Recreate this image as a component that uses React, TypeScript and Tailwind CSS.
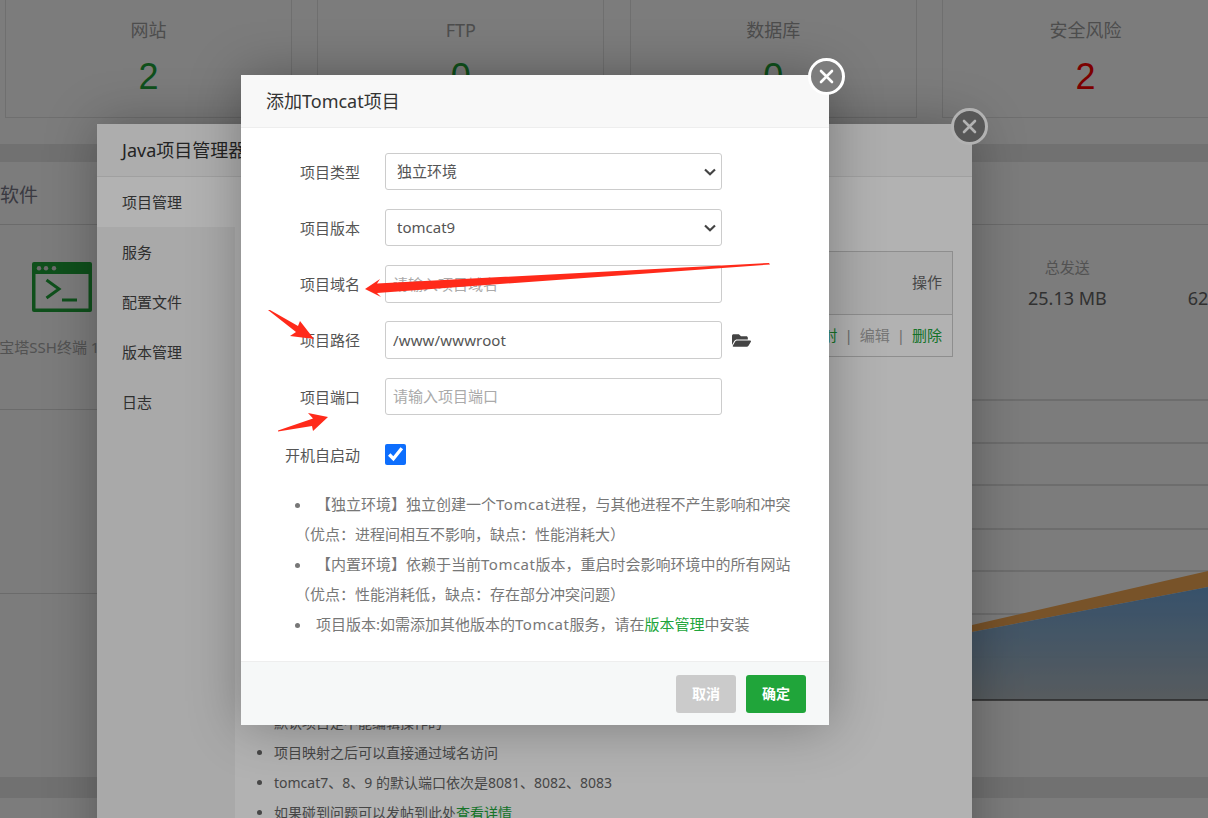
import type { ReactNode } from "react"
import { FaFolderOpen } from "react-icons/fa"

const stats = [
  { name: "网站", value: "2", color: "text-[#20a53a]" },
  { name: "FTP", value: "0", color: "text-[#20a53a]" },
  { name: "数据库", value: "0", color: "text-[#20a53a]" },
  { name: "安全风险", value: "2", color: "text-[#ff0000]" },
]

const javaMenu = ["项目管理", "服务", "配置文件", "版本管理", "日志"]

const gridLines = [10, 53, 95, 139, 181, 224, 267]

function CloseButton({ top }: { top: string }) {
  return (
    <div className={`absolute -right-[16px] flex h-[37px] w-[37px] items-center justify-center rounded-full border-[3px] border-white bg-[#7d7d7d] ${top}`}>
      <svg width="15" height="15" viewBox="0 0 15 15" fill="none" stroke="white" strokeWidth="2.6" strokeLinecap="round">
        <path d="M2 2 13 13M13 2 2 13" />
      </svg>
    </div>
  )
}

function FormRow({ label, children, className = "" }: { label: string; children: ReactNode; className?: string }) {
  return (
    <div className={`flex items-center ${className}`}>
      <label className="mr-[25px] w-[119px] pt-px text-right text-[15px] text-[#555]">{label}</label>
      {children}
    </div>
  )
}

function SelectBox({ value }: { value: string }) {
  return (
    <div className="relative h-[37px] w-[337px]">
      <select defaultValue={value} className="h-full w-full appearance-none rounded-[3px] border border-[#ccc] bg-white pl-[11px] text-[15px] text-[#555]">
        <option value={value}>{value}</option>
      </select>
      <svg className="pointer-events-none absolute right-[6px] top-[15px]" width="12" height="8" viewBox="0 0 12 8" fill="none" stroke="#444" strokeWidth="2.2">
        <path d="M1 1.5 6 6.2 11 1.5" />
      </svg>
    </div>
  )
}

function SshIcon() {
  return (
    <svg width="60" height="50" viewBox="0 0 60 50" fill="none">
      <rect width="60" height="50" rx="2" fill="#20a53a" />
      <rect x="3.5" y="12" width="53" height="34.5" fill="white" />
      <circle cx="7" cy="6.3" r="2.2" fill="#ddd" />
      <circle cx="14" cy="6.3" r="2.2" fill="#ddd" />
      <circle cx="22" cy="6.3" r="2.2" fill="#ddd" />
      <path d="M14.5 18 27 27 14.5 36" stroke="#20a53a" strokeWidth="3" />
      <path d="M30 38H45" stroke="#20a53a" strokeWidth="3" />
    </svg>
  )
}

function Background() {
  return (
    <div className="-mt-[10px] flex flex-col bg-[#e8e8e8]">
      <div className="flex h-[154px] gap-[25.33px] bg-white pl-[5px]">
        {stats.map((s) => (
          <div key={s.name} className="flex h-[128px] w-[287px] flex-none flex-col items-center border border-[#e4e4e4] pt-[25px]">
            <div className="text-[18px] leading-[28px] text-[#a0a0a0]">{s.name}</div>
            <div className={`mt-[13px] font-['Liberation_Sans',sans-serif] text-[36px] leading-[40px] ${s.color}`}>{s.value}</div>
          </div>
        ))}
      </div>
      <div className="mt-[18px] h-[615px] bg-white">
        <div className="flex h-[63px] items-center border-b border-[#ddd] pt-[5px] text-[19px] text-[#778]">软件</div>
        <div className="flex">
          <div className="w-[620px] flex-none">
            <div className="h-[185px] border-b border-[#ddd] pt-[37px]">
              <div className="-ml-[4px] flex w-[132px] flex-col items-center">
                <SshIcon />
                <div className="mt-[25px] whitespace-nowrap text-[15px] leading-[20px] text-[#aaa]">宝塔SSH终端 1.0.0</div>
              </div>
            </div>
            <div className="h-[184px] border-b border-[#ddd]" />
          </div>
          <div className="min-w-0 flex-1">
            <div className="flex gap-[81px] pl-[408px] pt-[32px]">
              <div className="flex flex-none flex-col items-center">
                <div className="text-[15px] leading-[20px] text-[#aaa]">总发送</div>
                <div className="mt-[7px] whitespace-nowrap text-[18px] leading-[28px] text-[#666]">25.13 MB</div>
              </div>
              <div className="flex flex-none flex-col items-center">
                <div className="mt-[27px] whitespace-nowrap text-[18px] leading-[28px] text-[#666]">62.85 MB</div>
              </div>
            </div>
            <svg className="ml-auto mt-[78px] block" width="236" height="320" viewBox="0 0 236 320">
              <defs>
                <linearGradient id="netBlue" x1="0" y1="0" x2="0" y2="1">
                  <stop offset="0" stopColor="#6aa3da" />
                  <stop offset="1" stopColor="#b0bac0" />
                </linearGradient>
              </defs>
              {gridLines.map((y) => (
                <line key={y} x1="0" x2="236" y1={y} y2={y} stroke="#c4c4c4" strokeWidth="1.2" />
              ))}
              <polygon points="0,242 236,197 236,181 0,235" fill="#f8ab55" />
              <polygon points="0,242 236,197 236,310 0,310" fill="url(#netBlue)" opacity="0.95" />
              <line x1="0" x2="236" y1="310" y2="310" stroke="#555" strokeWidth="1.5" />
            </svg>
          </div>
        </div>
      </div>
      <div className="mt-[21px] h-[40px] bg-white" />
    </div>
  )
}

function JavaManager() {
  return (
    <div className="absolute left-[97px] top-[124px] h-[800px] w-[875px] bg-white shadow-[1px_1px_50px_rgba(0,0,0,0.3)]">
      <div className="flex h-[53px] items-center border-b border-[#e5e5e5] bg-[#f8f8f8] pl-[25px] text-[18px] text-[#333]">Java项目管理器</div>
      <div className="flex">
        <div className="h-[747px] w-[138px] flex-none bg-[#f2f2f2]">
          {javaMenu.map((item, i) => (
            <div key={item} className={`flex h-[50px] items-center pl-[25px] text-[15px] text-[#444] ${i === 0 ? "bg-white" : ""}`}>
              {item}
            </div>
          ))}
        </div>
        <div className="min-w-0 flex-1 pl-[20px] pr-[19px] pt-[74px]">
          <div className="border border-[#ccc] text-[15px]">
            <div className="flex h-[63px] items-center justify-end border-b border-[#ccc] bg-[#f6f6f6] pb-[2px] pr-[10px] text-[#666]">操作</div>
            <div className="flex h-[41px] items-center justify-end pr-[10px]">
              <span className="text-[#20a53a]">映射</span>
              <span className="mx-[7px] text-[#999]">|</span>
              <span className="text-[#aaa]">编辑</span>
              <span className="mx-[7px] text-[#999]">|</span>
              <span className="text-[#20a53a]">删除</span>
            </div>
          </div>
          <ul className="mt-[351px] list-disc pl-[19px] text-[14px] leading-[30px] text-[#666]">
            <li>默认项目是不能编辑操作的</li>
            <li>项目映射之后可以直接通过域名访问</li>
            <li>tomcat7、8、9 的默认端口依次是8081、8082、8083</li>
            <li>
              如果碰到问题可以发帖到此处<span className="text-[#20a53a]">查看详情</span>
            </li>
          </ul>
        </div>
      </div>
      <CloseButton top="-top-[16px]" />
    </div>
  )
}

function AddTomcat() {
  return (
    <div className="absolute left-[241px] top-[75px] flex h-[650px] w-[588px] flex-col bg-white shadow-[1px_1px_50px_rgba(0,0,0,0.3)]">
      <div className="flex h-[53px] flex-none items-center border-b border-[#eee] bg-[#f8f8f8] pl-[25px] text-[18px] text-[#333]">添加Tomcat项目</div>
      <div className="flex flex-col gap-[19px] pt-[25px]">
        <FormRow label="项目类型">
          <SelectBox value="独立环境" />
        </FormRow>
        <FormRow label="项目版本">
          <SelectBox value="tomcat9" />
        </FormRow>
        <FormRow label="项目域名">
          <input placeholder="请输入项目域名" className="h-[38px] w-[337px] rounded-[3px] border border-[#ccc] px-[7px] text-[15px] text-[#555] placeholder:text-[#aaa]" />
        </FormRow>
        <FormRow label="项目路径" className="-mt-px">
          <input defaultValue="/www/wwwroot" className="h-[38px] w-[337px] rounded-[3px] border border-[#ccc] px-[7px] text-[15px] tracking-[0.15px] text-[#555]" />
          <FaFolderOpen className="ml-[10px] text-[19px] text-[#444]" />
        </FormRow>
        <FormRow label="项目端口">
          <input placeholder="请输入项目端口" className="h-[37px] w-[337px] rounded-[3px] border border-[#ccc] px-[7px] pb-px text-[15px] text-[#555] placeholder:text-[#aaa]" />
        </FormRow>
      </div>
      <FormRow label="开机自启动" className="mt-[21px] h-[37px]">
        <input type="checkbox" defaultChecked className="h-[21px] w-[21px] accent-[#0d6efd]" />
      </FormRow>
      <ul className="ml-[54px] mt-[16px] list-inside list-disc text-[15px] leading-[30px] text-[#777]">
        <li>
          【独立环境】独立创建一个<span className="tracking-[0.5px]">Tomcat</span>进程，与其他进程不产生影响和冲突
          <br />
          （优点：进程间相互不影响，缺点：性能消耗大）
        </li>
        <li>
          【内置环境】依赖于当前<span className="tracking-[0.5px]">Tomcat</span>版本，重启时会影响环境中的所有网站
          <br />
          （优点：性能消耗低，缺点：存在部分冲突问题）
        </li>
        <li>
          项目版本:如需添加其他版本的<span className="tracking-[0.5px]">Tomcat</span>服务，请在<span className="text-[#20a53a]">版本管理</span>中安装
        </li>
      </ul>
      <div className="mt-auto flex h-[64px] flex-none items-center justify-end gap-[10px] border-t border-[#eee] bg-[#f6f8f8] pr-[23px]">
        <button className="h-[38px] w-[60px] rounded-[3px] bg-[#cbcbcb] text-[14px] font-bold text-white">取消</button>
        <button className="h-[38px] w-[60px] rounded-[3px] bg-[#20a53a] text-[14px] font-bold text-white">确定</button>
      </div>
      <CloseButton top="-top-[17px]" />
    </div>
  )
}

function RedArrows() {
  return (
    <svg className="pointer-events-none absolute left-0 top-0" width="1208" height="818" viewBox="0 0 1208 818">
      <polygon points="365,289 380,279 377,283.5 769,263 770,264.5 377,293 381,297" fill="#ff2a1a" />
      <polygon points="268,310 270,310 298,326 300,321 314,339 290,336 296,332" fill="#ff2a1a" />
      <polygon points="278,430.5 313,418.5 308,413 328,417 313,431 312,426 278,431.5" fill="#ff2a1a" />
    </svg>
  )
}

export default function App() {
  return (
    <div className="relative h-[818px] w-[1208px] overflow-hidden font-['Noto_Sans','Noto_Sans_CJK_SC',sans-serif]">
      <Background />
      <div className="absolute inset-0 bg-black/30" />
      <JavaManager />
      <div className="absolute inset-0 bg-black/30" />
      <AddTomcat />
      <RedArrows />
    </div>
  )
}
